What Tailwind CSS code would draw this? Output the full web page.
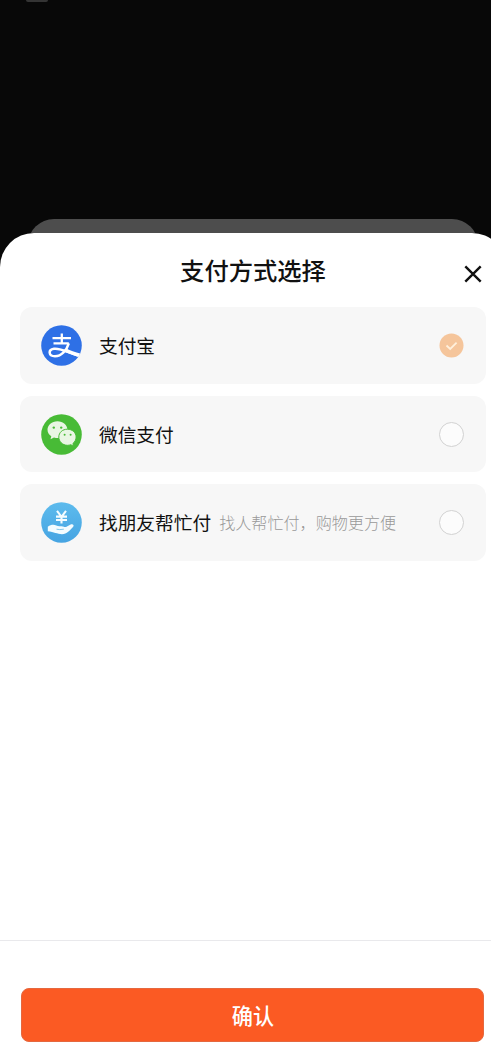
<!DOCTYPE html>
<html lang="zh-CN">
<head>
<meta charset="utf-8">
<title>支付方式选择</title>
<script src="https://cdn.jsdelivr.net/npm/@tailwindcss/browser@4"></script>
</head>
<body class="h-[1051px] w-[491px] overflow-hidden bg-[#080808] font-['Noto_Sans_CJK_SC',sans-serif] text-[#111]">
<div class="flex h-full w-[506px] flex-col">
  <div class="flex h-[233px] shrink-0 flex-col justify-between">
    <div class="ml-[26px] h-[2px] w-[22px] rounded-b-full bg-[#343434]"></div>
    <div class="ml-7 h-[14px] w-[450px] overflow-hidden"><div class="h-16 rounded-t-[26px] bg-[#4d4d4d]"></div></div>
  </div>
  <main class="flex grow flex-col rounded-t-[34px] bg-white">
    <header class="grid h-[74px] shrink-0 grid-cols-[1fr_auto_1fr] items-center">
      <span></span>
      <h1 class="text-[24.3px] leading-9 font-medium">支付方式选择</h1>
      <button class="mt-[8px] mr-[24px] justify-self-end" aria-label="关闭">
        <svg class="block size-[18px]" viewBox="0 0 18 18" fill="none" stroke="#111" stroke-width="2.4"><path d="M1.3 1.3 16.7 16.7M16.7 1.3 1.3 16.7"/></svg>
      </button>
    </header>
    <section class="ml-5 flex w-[466px] flex-col gap-[12px] text-[18.7px]">
      <div class="flex h-[77px] items-center rounded-xl bg-[#f7f7f7] pr-[22px] pl-[21px]">
        <svg class="size-[41px]" viewBox="0 0 41 41" fill="none">
          <defs><clipPath id="disc"><circle cx="20.5" cy="20.5" r="20.3"/></clipPath></defs>
          <circle cx="20.5" cy="20.5" r="20.3" fill="#2e70e6"/>
          <g clip-path="url(#disc)" stroke="#fff">
            <path d="M11.5 13.2H30M20.8 8.5V18M12.5 18.3H27.8" stroke-width="2.3"/>
            <path d="M27.8 18.3C25.7 25.2 20.5 31.2 14 31.2C7.2 31.2 6.9 24.5 13 23.7C20 22.8 26.5 27.4 40 31.5" stroke-width="2.5"/>
            <path d="M25 25.3C30 27.8 34.5 29 40 30.5" stroke-width="3.6"/>
          </g>
        </svg>
        <span class="ml-[17px] grow">支付宝</span>
        <svg class="size-[25px]" viewBox="0 0 25 25" fill="none"><circle cx="12.5" cy="12.5" r="12" fill="#f5c59b"/><path d="m7.5 12.5 3.7 3.4 6.4-6.2" stroke="#fff0dc" stroke-width="1.8"/></svg>
      </div>
      <div class="flex h-[76px] items-center rounded-xl bg-[#f7f7f7] pr-[22px] pl-[21px]">
        <svg class="size-[41px]" viewBox="0 0 41 41">
          <circle cx="20.5" cy="20.5" r="20.3" fill="#48bb36"/>
          <path d="M16.5 7.2C10.8 7.2 6.5 10.9 6.5 15.7C6.5 18.5 8 20.8 10.3 22.3L9.5 25.3 13 23.6C14.2 24 15.5 24.1 17 24.1C22.5 24.1 26.4 20.4 26.4 15.7S22.1 7.2 16.5 7.2Z" fill="#e9f6e3"/>
          <path d="M26.4 15.2C21.5 15.2 17.8 18.6 17.8 23S21.5 31.3 26.4 31.3C27.6 31.3 28.8 31.1 29.8 30.7L32.6 32.3 31.9 29.5C33.9 28 35.1 25.5 35.1 23C35.1 18.6 31.3 15.2 26.4 15.2Z" fill="#e9f6e3" stroke="#48bb36"/>
          <g fill="#48bb36"><circle cx="12.8" cy="13.6" r="1.2"/><circle cx="20.2" cy="13.6" r="1.2"/><circle cx="23.6" cy="20.8" r="1"/><circle cx="29.6" cy="20.8" r="1"/></g>
        </svg>
        <span class="ml-[17px] grow">微信支付</span>
        <span class="size-[25px] rounded-full border-[1.5px] border-[#d2d2d2] bg-[#fcfcfc]"></span>
      </div>
      <div class="flex h-[77px] items-center rounded-xl bg-[#f7f7f7] pr-[22px] pl-[21px]">
        <svg class="size-[41px]" viewBox="0 0 41 41">
          <defs><linearGradient id="sky" x2="0" y2="1"><stop stop-color="#5dbbed"/><stop offset="1" stop-color="#46a4e2"/></linearGradient></defs>
          <circle cx="20.5" cy="20.5" r="20.3" fill="url(#sky)"/>
          <path d="m16 8.8 4.5 6 4.5-6M20.5 14.5v7M15 14.6h11M15 18h11" fill="none" stroke="#f4fcff" stroke-width="2.1"/>
          <path d="M6.8 24.8C9.7 22.6 12.7 22.3 15.3 23.4C17 24.2 20 24 22 24.4C23.6 24.8 24 25.2 25.5 24.8L29.6 22.5C32 21.5 33.6 23.4 32 25C28.8 28.3 26 32.2 21 32.2C16.2 32.2 13 29.8 6.8 29.3Z" fill="#f4fcff"/>
          <path d="M15.5 27.2Q18.5 28 22.8 27.2" fill="none" stroke="#83c9ed" stroke-width="1"/>
        </svg>
        <span class="ml-[17px]">找朋友帮忙付</span>
        <span class="ml-2 grow text-[16.1px] font-light text-[#999]">找人帮忙付，购物更方便</span>
        <span class="size-[25px] rounded-full border-[1.5px] border-[#d2d2d2] bg-[#fcfcfc]"></span>
      </div>
    </section>
    <footer class="mt-auto h-[111px] shrink-0 border-t border-[#e9e9ec] pt-[47px] pl-[21px]">
      <button class="flex h-[54px] w-[463px] items-center justify-center rounded-lg border border-[#e5683f] bg-[#fb5a23] text-[21.2px] font-medium text-white"><span class="pl-px">确认</span></button>
    </footer>
  </main>
</div>
</body>
</html>
